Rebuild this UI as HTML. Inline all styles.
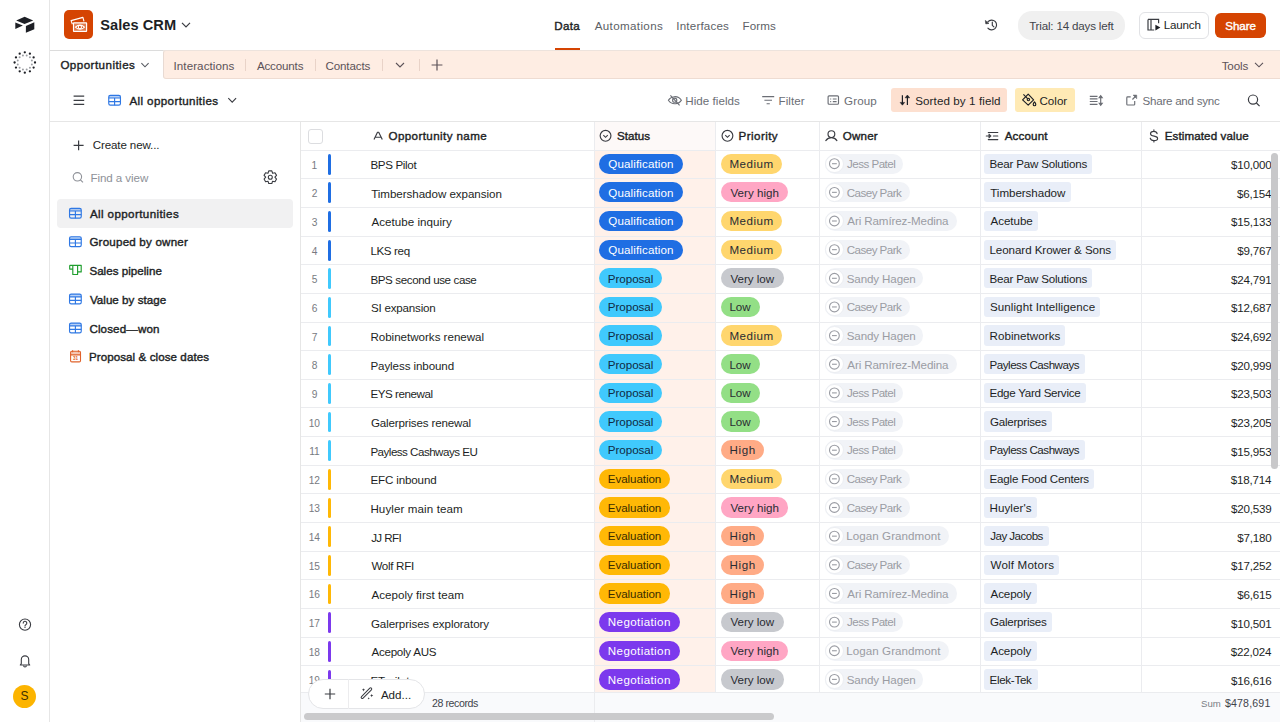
<!DOCTYPE html><html><head><meta charset="utf-8"><title>Sales CRM</title><style>
*{box-sizing:border-box;margin:0;padding:0}
html,body{width:1280px;height:722px;overflow:hidden;background:#fff;font-family:"Liberation Sans", sans-serif;color:#1d1f25}
.a{position:absolute}
.t{position:absolute;white-space:nowrap;line-height:1}
svg{position:absolute;overflow:visible}
</style></head><body>
<div class="a" style="left:49px;top:0;width:1px;height:722px;background:#e6e6e6"></div>
<svg style="left:0;top:0" width="50" height="50" viewBox="0 0 50 50">
<path d="M24.6 16.8 L33.2 20.4 L24.6 24.1 L16.2 20.5 Z" fill="#1d1f25"/>
<path d="M15.3 22.4 L22.9 25.6 L15.3 28.9 Z" fill="#1d1f25"/>
<path d="M25.9 25.9 L34.3 22.3 L34.3 29.3 L25.9 32.8 Z" fill="#1d1f25"/>
</svg>
<svg style="left:0;top:0" width="50" height="90"><circle cx="24.80" cy="52.30" r="1.15" fill="#1d1f25"/><circle cx="26.69" cy="55.45" r="1.0" fill="#9c9ea3"/><circle cx="29.90" cy="53.67" r="1.15" fill="#1d1f25"/><circle cx="29.96" cy="57.34" r="1.0" fill="#9c9ea3"/><circle cx="33.63" cy="57.40" r="1.15" fill="#1d1f25"/><circle cx="31.85" cy="60.61" r="1.0" fill="#9c9ea3"/><circle cx="35.00" cy="62.50" r="1.15" fill="#1d1f25"/><circle cx="31.85" cy="64.39" r="1.0" fill="#9c9ea3"/><circle cx="33.63" cy="67.60" r="1.15" fill="#1d1f25"/><circle cx="29.96" cy="67.66" r="1.0" fill="#9c9ea3"/><circle cx="29.90" cy="71.33" r="1.15" fill="#1d1f25"/><circle cx="26.69" cy="69.55" r="1.0" fill="#9c9ea3"/><circle cx="24.80" cy="72.70" r="1.15" fill="#1d1f25"/><circle cx="22.91" cy="69.55" r="1.0" fill="#9c9ea3"/><circle cx="19.70" cy="71.33" r="1.15" fill="#1d1f25"/><circle cx="19.64" cy="67.66" r="1.0" fill="#9c9ea3"/><circle cx="15.97" cy="67.60" r="1.15" fill="#1d1f25"/><circle cx="17.75" cy="64.39" r="1.0" fill="#9c9ea3"/><circle cx="14.60" cy="62.50" r="1.15" fill="#1d1f25"/><circle cx="17.75" cy="60.61" r="1.0" fill="#9c9ea3"/><circle cx="15.97" cy="57.40" r="1.15" fill="#1d1f25"/><circle cx="19.64" cy="57.34" r="1.0" fill="#9c9ea3"/><circle cx="19.70" cy="53.67" r="1.15" fill="#1d1f25"/><circle cx="22.91" cy="55.45" r="1.0" fill="#9c9ea3"/></svg>
<svg style="left:0;top:600px" width="50" height="50" viewBox="0 600 50 50">
<circle cx="25" cy="624.6" r="5.6" fill="none" stroke="#3a3c42" stroke-width="1.1"/>
<path d="M23.2 623.1 a1.8 1.8 0 1 1 2.6 1.6 c-0.6 0.3 -0.8 0.6 -0.8 1.2" fill="none" stroke="#3a3c42" stroke-width="1.1" stroke-linecap="round"/>
<circle cx="25" cy="627.4" r="0.6" fill="#3a3c42"/>
</svg>
<svg style="left:0;top:640px" width="50" height="40" viewBox="0 640 50 40">
<path d="M20.3 665 L21.3 663.6 L21.3 659.6 a3.7 3.7 0 0 1 7.4 0 L28.7 663.6 L29.7 665 Z" fill="none" stroke="#3a3c42" stroke-width="1.1" stroke-linejoin="round"/>
<path d="M23.6 665.6 a1.4 1.4 0 0 0 2.8 0" fill="none" stroke="#3a3c42" stroke-width="1.1"/>
</svg>
<div class="a" style="left:13px;top:684.5px;width:23px;height:23px;border-radius:50%;background:#fcb400"></div>
<div class="t" style="left:20.60px;top:690px;font-size:12px;color:#3b2f00">S</div>
<div class="a" style="left:64.4px;top:10.4px;width:28.7px;height:28.7px;border-radius:5px;background:#d54402"></div>
<div class="t" style="left:100.20px;top:18px;font-size:14.6px;color:#1d1f25;font-weight:700;letter-spacing:0.062px">Sales CRM</div>
<svg style="left:180px;top:20px" width="12" height="10" viewBox="0 0 12 10"><path d="M2 2.8 L6 6.8 L10 2.8" fill="none" stroke="#3a3c42" stroke-width="1.2"/></svg>
<div class="t" style="left:554.30px;top:20px;font-size:11.6px;color:#1d1f25;-webkit-text-stroke:0.4px #1d1f25;letter-spacing:0.300px">Data</div>
<div class="t" style="left:594.70px;top:20px;font-size:11.6px;color:#5c5f66;letter-spacing:0.360px">Automations</div>
<div class="t" style="left:676.30px;top:20px;font-size:11.6px;color:#5c5f66;letter-spacing:0.189px">Interfaces</div>
<div class="t" style="left:742.50px;top:20px;font-size:11.6px;color:#5c5f66;letter-spacing:0.100px">Forms</div>
<div class="a" style="left:555px;top:48px;width:25px;height:2px;background:#d54402"></div>
<svg style="left:980px;top:14px" width="24" height="22" viewBox="980 14 24 22">
<path d="M987.9 28.1 A4.9 4.9 0 1 0 988.0 21.7" fill="none" stroke="#3a3c42" stroke-width="1.15" stroke-linecap="round"/>
<path d="M985.3 20.4 L985.8 23.9 L989.0 23.4 Z" fill="#3a3c42" stroke="#3a3c42" stroke-width="0.6" stroke-linejoin="round"/>
<path d="M992.3 22.1 L992.3 25.3 L993.9 26.8" fill="none" stroke="#3a3c42" stroke-width="1.15" stroke-linecap="round" stroke-linejoin="round"/>
</svg>
<div class="a" style="left:1018px;top:11px;width:107px;height:28.5px;border-radius:14px;background:#f0f0f0"></div>
<div class="t" style="left:1029.15px;top:20px;font-size:11.6px;color:#41444b;letter-spacing:-0.178px">Trial: 14 days left</div>
<div class="a" style="left:1139px;top:12px;width:70px;height:27px;border-radius:6px;background:#fff;border:1px solid #e1e2e5"></div>
<svg style="left:1146px;top:18px" width="16" height="14" viewBox="0 0 16 14">
<path d="M2 1.4 L12.6 1.4 L12.6 5.2 M2 1.4 L2 12 L8.2 12 M5 1.4 L5 12" fill="none" stroke="#3a3c42" stroke-width="1.2"/>
<path d="M9.4 6.8 L14.4 9.6 L9.4 12.4 Z" fill="#1d1f25"/>
</svg>
<div class="t" style="left:1163.80px;top:19px;font-size:11.6px;color:#1d1f25;letter-spacing:-0.180px">Launch</div>
<div class="a" style="left:1215px;top:12.5px;width:51px;height:25.5px;border-radius:6px;background:#d54402"></div>
<div class="t" style="left:1225.30px;top:20px;font-size:11.6px;color:#fff;-webkit-text-stroke:0.4px #fff;letter-spacing:-0.075px">Share</div>
<div class="a" style="left:50px;top:50px;width:1230px;height:1px;background:#ebe4e0"></div>
<div class="a" style="left:163px;top:50px;width:1117px;height:29px;background:#feede3;border-top:1px solid #ede3dd;border-bottom:1px solid #eedcd2;border-left:1px solid #e8dad3;border-radius:3px 0 0 3px"></div>
<div class="a" style="left:50px;top:50px;width:113px;height:1px;background:#dcdcdc"></div>
<div class="t" style="left:60.40px;top:59px;font-size:11.6px;color:#1d1f25;-webkit-text-stroke:0.4px #1d1f25;letter-spacing:0.458px">Opportunities</div>
<svg style="left:139px;top:60px" width="12" height="10" viewBox="0 0 12 10"><path d="M2.4 3.2 L6 6.8 L9.6 3.2" fill="none" stroke="#55585f" stroke-width="1.1"/></svg>
<div class="t" style="left:173.50px;top:60px;font-size:11.6px;color:#5c5258;letter-spacing:0.082px">Interactions</div>
<div class="t" style="left:256.90px;top:60px;font-size:11.6px;color:#5c5258;letter-spacing:-0.164px">Accounts</div>
<div class="t" style="left:325.50px;top:60px;font-size:11.6px;color:#5c5258;letter-spacing:-0.143px">Contacts</div>
<div class="a" style="left:245px;top:59px;width:1px;height:12px;background:#e9d3c8"></div>
<div class="a" style="left:315px;top:59px;width:1px;height:12px;background:#e9d3c8"></div>
<div class="a" style="left:382px;top:59px;width:1px;height:12px;background:#e9d3c8"></div>
<div class="a" style="left:419px;top:59px;width:1px;height:12px;background:#e9d3c8"></div>
<svg style="left:394px;top:60px" width="12" height="10" viewBox="0 0 12 10"><path d="M2 3 L6 7 L10 3" fill="none" stroke="#5c5258" stroke-width="1.1"/></svg>
<svg style="left:430px;top:58px" width="14" height="14" viewBox="0 0 14 14"><path d="M7 1.6 L7 12.4 M1.6 7 L12.4 7" fill="none" stroke="#5c5258" stroke-width="1.2"/></svg>
<div class="t" style="left:1221.65px;top:60px;font-size:11.6px;color:#5c5258;letter-spacing:-0.075px">Tools</div>
<svg style="left:1253px;top:60px" width="12" height="10" viewBox="0 0 12 10"><path d="M2 2.8 L6 6.8 L10 2.8" fill="none" stroke="#5c5258" stroke-width="1.1"/></svg>
<div class="a" style="left:50px;top:121px;width:1230px;height:1px;background:#e6e6e6"></div>
<div class="t" style="left:129.50px;top:95px;font-size:11.6px;color:#1d1f25;-webkit-text-stroke:0.4px #1d1f25;letter-spacing:0.378px">All opportunities</div>
<div class="t" style="left:685.25px;top:95px;font-size:11.6px;color:#6b6e75;letter-spacing:0.050px">Hide fields</div>
<div class="t" style="left:778.50px;top:95px;font-size:11.6px;color:#6b6e75;letter-spacing:0.050px">Filter</div>
<div class="t" style="left:844.00px;top:95px;font-size:11.6px;color:#6b6e75;letter-spacing:0.125px">Group</div>
<div class="a" style="left:891px;top:88px;width:116px;height:23.5px;border-radius:3px;background:#fde0d0"></div>
<div class="t" style="left:915.25px;top:95px;font-size:11.6px;color:#1d1f25;letter-spacing:0.094px">Sorted by 1 field</div>
<div class="a" style="left:1014.5px;top:88px;width:60px;height:23.5px;border-radius:3px;background:#ffeab5"></div>
<div class="t" style="left:1039.50px;top:95px;font-size:11.6px;color:#1d1f25">Color</div>
<div class="t" style="left:1142.50px;top:95px;font-size:11.6px;color:#6b6e75;letter-spacing:-0.250px">Share and sync</div>
<div class="a" style="left:300px;top:122px;width:1px;height:600px;background:#e6e6e6"></div>
<div class="t" style="left:92.80px;top:139px;font-size:11.6px;color:#1d1f25;letter-spacing:-0.138px">Create new...</div>
<div class="t" style="left:90.40px;top:172px;font-size:11.6px;color:#8e9198;letter-spacing:-0.075px">Find a view</div>
<div class="a" style="left:57px;top:199px;width:236px;height:28.5px;border-radius:4px;background:#f1f1f2"></div>
<div class="t" style="left:89.90px;top:208px;font-size:11.6px;color:#1d1f25;-webkit-text-stroke:0.4px #1d1f25;letter-spacing:0.397px">All opportunities</div>
<div class="t" style="left:89.40px;top:236px;font-size:11.6px;color:#1d1f25;-webkit-text-stroke:0.4px #1d1f25;letter-spacing:0.203px">Grouped by owner</div>
<div class="t" style="left:89.40px;top:265px;font-size:11.6px;color:#1d1f25;-webkit-text-stroke:0.4px #1d1f25;letter-spacing:0.019px">Sales pipeline</div>
<div class="t" style="left:89.90px;top:294px;font-size:11.6px;color:#1d1f25;-webkit-text-stroke:0.4px #1d1f25;letter-spacing:0.031px">Value by stage</div>
<div class="t" style="left:89.40px;top:323px;font-size:11.6px;color:#1d1f25;-webkit-text-stroke:0.4px #1d1f25;letter-spacing:0.128px">Closed—won</div>
<div class="t" style="left:88.90px;top:351px;font-size:11.6px;color:#1d1f25;-webkit-text-stroke:0.4px #1d1f25;letter-spacing:0.074px">Proposal &amp; close dates</div>
<div class="a" style="left:595px;top:122px;width:120px;height:28px;background:#fdf9f8"></div>
<div class="a" style="left:595px;top:151px;width:120px;height:541px;background:#fff1ea"></div>
<div class="a" style="left:307.5px;top:128.5px;width:15px;height:15px;border-radius:3px;border:1px solid #dcdde0;background:#fff"></div>
<div class="t" style="left:388.50px;top:130px;font-size:11.6px;color:#1d1f25;-webkit-text-stroke:0.4px #1d1f25;letter-spacing:0.400px">Opportunity name</div>
<div class="t" style="left:617.10px;top:130px;font-size:11.6px;color:#1d1f25;-webkit-text-stroke:0.4px #1d1f25">Status</div>
<div class="t" style="left:738.60px;top:130px;font-size:11.6px;color:#1d1f25;-webkit-text-stroke:0.4px #1d1f25;letter-spacing:0.429px">Priority</div>
<div class="t" style="left:842.70px;top:130px;font-size:11.6px;color:#1d1f25;-webkit-text-stroke:0.4px #1d1f25;letter-spacing:0.200px">Owner</div>
<div class="t" style="left:1004.70px;top:130px;font-size:11.6px;color:#1d1f25;-webkit-text-stroke:0.4px #1d1f25;letter-spacing:0.150px">Account</div>
<div class="t" style="left:1164.70px;top:130px;font-size:11.6px;color:#1d1f25;-webkit-text-stroke:0.4px #1d1f25;letter-spacing:0.107px">Estimated value</div>
<div class="a" style="left:301px;top:150px;width:979px;height:1px;background:#ebecef"></div>
<div class="a" style="left:594px;top:122px;width:1px;height:570px;background:#ebecef"></div>
<div class="a" style="left:715px;top:122px;width:1px;height:570px;background:#ebecef"></div>
<div class="a" style="left:819px;top:122px;width:1px;height:570px;background:#ebecef"></div>
<div class="a" style="left:980px;top:122px;width:1px;height:570px;background:#ebecef"></div>
<div class="a" style="left:1141px;top:122px;width:1px;height:570px;background:#ebecef"></div>
<div class="a" style="left:301px;top:178px;width:979px;height:1px;background:#ebecef"></div>
<div class="t" style="left:311.60px;top:161px;font-size:10.2px;color:#777a81;letter-spacing:-0.200px">1</div>
<div class="a" style="left:327.7px;top:153.80px;width:3.6px;height:20.8px;border-radius:2px;background:#1f6ee3"></div>
<div class="t" style="left:370.40px;top:159px;font-size:11.6px;color:#1d1f25;letter-spacing:-0.337px">BPS Pilot</div>
<div class="a" style="left:599.4px;top:153.55px;width:83.5px;height:20.3px;border-radius:10.15px;background:#1f6ee3"></div>
<div class="t" style="left:608.30px;top:158px;font-size:11.6px;color:#ffffff;letter-spacing:0.121px">Qualification</div>
<div class="a" style="left:721.4px;top:153.55px;width:60.5px;height:20.3px;border-radius:10.15px;background:#ffd66e"></div>
<div class="t" style="left:729.50px;top:158px;font-size:11.6px;color:#2a2c33;letter-spacing:0.460px">Medium</div>
<div class="a" style="left:825.25px;top:153.55px;width:78.1px;height:20.3px;border-radius:10.15px;background:#f1f3f7"></div>
<div class="a" style="left:825.2px;top:154.50px;width:18.4px;height:18.4px;border-radius:50%;background:#fff;border:1px solid #eceef2"></div>
<div class="t" style="left:847.00px;top:158px;font-size:11.6px;color:#9a9ca3;letter-spacing:-0.517px">Jess Patel</div>
<div class="a" style="left:984.2px;top:153.55px;width:108.3px;height:20.3px;border-radius:3px;background:#e9eef8"></div>
<div class="t" style="left:989.50px;top:158px;font-size:11.6px;color:#1d1f25;letter-spacing:-0.203px">Bear Paw Solutions</div>
<div class="t" style="left:1230.90px;top:159px;font-size:11.6px;color:#1d1f25;letter-spacing:-0.200px">$10,000</div>
<div class="a" style="left:301px;top:207px;width:979px;height:1px;background:#ebecef"></div>
<div class="t" style="left:311.73px;top:189px;font-size:10.2px;color:#777a81;letter-spacing:-0.200px">2</div>
<div class="a" style="left:327.7px;top:182.45px;width:3.6px;height:20.8px;border-radius:2px;background:#1f6ee3"></div>
<div class="t" style="left:371.15px;top:188px;font-size:11.6px;color:#1d1f25;letter-spacing:-0.045px">Timbershadow expansion</div>
<div class="a" style="left:599.4px;top:182.20px;width:83.5px;height:20.3px;border-radius:10.15px;background:#1f6ee3"></div>
<div class="t" style="left:608.30px;top:187px;font-size:11.6px;color:#ffffff;letter-spacing:0.121px">Qualification</div>
<div class="a" style="left:721.4px;top:182.20px;width:66.5px;height:20.3px;border-radius:10.15px;background:#ffa6c4"></div>
<div class="t" style="left:730.50px;top:187px;font-size:11.6px;color:#2a2c33;letter-spacing:0.006px">Very high</div>
<div class="a" style="left:825.25px;top:182.20px;width:84.9px;height:20.3px;border-radius:10.15px;background:#f1f3f7"></div>
<div class="a" style="left:825.2px;top:183.15px;width:18.4px;height:18.4px;border-radius:50%;background:#fff;border:1px solid #eceef2"></div>
<div class="t" style="left:846.75px;top:187px;font-size:11.6px;color:#9a9ca3;letter-spacing:-0.539px">Casey Park</div>
<div class="a" style="left:984.2px;top:182.20px;width:87.0px;height:20.3px;border-radius:3px;background:#e9eef8"></div>
<div class="t" style="left:990.25px;top:187px;font-size:11.6px;color:#1d1f25;letter-spacing:-0.045px">Timbershadow</div>
<div class="t" style="left:1236.95px;top:188px;font-size:11.6px;color:#1d1f25;letter-spacing:-0.200px">$6,154</div>
<div class="a" style="left:301px;top:236px;width:979px;height:1px;background:#ebecef"></div>
<div class="t" style="left:311.73px;top:218px;font-size:10.2px;color:#777a81;letter-spacing:-0.200px">3</div>
<div class="a" style="left:327.7px;top:211.10px;width:3.6px;height:20.8px;border-radius:2px;background:#1f6ee3"></div>
<div class="t" style="left:371.40px;top:216px;font-size:11.6px;color:#1d1f25;letter-spacing:0.036px">Acetube inquiry</div>
<div class="a" style="left:599.4px;top:210.85px;width:83.5px;height:20.3px;border-radius:10.15px;background:#1f6ee3"></div>
<div class="t" style="left:608.30px;top:215px;font-size:11.6px;color:#ffffff;letter-spacing:0.121px">Qualification</div>
<div class="a" style="left:721.4px;top:210.85px;width:60.5px;height:20.3px;border-radius:10.15px;background:#ffd66e"></div>
<div class="t" style="left:729.50px;top:215px;font-size:11.6px;color:#2a2c33;letter-spacing:0.460px">Medium</div>
<div class="a" style="left:825.25px;top:210.85px;width:131.7px;height:20.3px;border-radius:10.15px;background:#f1f3f7"></div>
<div class="a" style="left:825.2px;top:211.80px;width:18.4px;height:18.4px;border-radius:50%;background:#fff;border:1px solid #eceef2"></div>
<div class="t" style="left:847.25px;top:215px;font-size:11.6px;color:#9a9ca3;letter-spacing:-0.106px">Ari Ramírez-Medina</div>
<div class="a" style="left:984.2px;top:210.85px;width:53.7px;height:20.3px;border-radius:3px;background:#e9eef8"></div>
<div class="t" style="left:990.50px;top:215px;font-size:11.6px;color:#1d1f25;letter-spacing:-0.050px">Acetube</div>
<div class="t" style="left:1230.90px;top:216px;font-size:11.6px;color:#1d1f25;letter-spacing:-0.200px">$15,133</div>
<div class="a" style="left:301px;top:264px;width:979px;height:1px;background:#ebecef"></div>
<div class="t" style="left:311.73px;top:247px;font-size:10.2px;color:#777a81;letter-spacing:-0.200px">4</div>
<div class="a" style="left:327.7px;top:239.75px;width:3.6px;height:20.8px;border-radius:2px;background:#1f6ee3"></div>
<div class="t" style="left:370.40px;top:245px;font-size:11.6px;color:#1d1f25;letter-spacing:-0.358px">LKS req</div>
<div class="a" style="left:599.4px;top:239.50px;width:83.5px;height:20.3px;border-radius:10.15px;background:#1f6ee3"></div>
<div class="t" style="left:608.30px;top:244px;font-size:11.6px;color:#ffffff;letter-spacing:0.121px">Qualification</div>
<div class="a" style="left:721.4px;top:239.50px;width:60.5px;height:20.3px;border-radius:10.15px;background:#ffd66e"></div>
<div class="t" style="left:729.50px;top:244px;font-size:11.6px;color:#2a2c33;letter-spacing:0.460px">Medium</div>
<div class="a" style="left:825.25px;top:239.50px;width:84.9px;height:20.3px;border-radius:10.15px;background:#f1f3f7"></div>
<div class="a" style="left:825.2px;top:240.45px;width:18.4px;height:18.4px;border-radius:50%;background:#fff;border:1px solid #eceef2"></div>
<div class="t" style="left:846.75px;top:244px;font-size:11.6px;color:#9a9ca3;letter-spacing:-0.539px">Casey Park</div>
<div class="a" style="left:984.2px;top:239.50px;width:132.3px;height:20.3px;border-radius:3px;background:#e9eef8"></div>
<div class="t" style="left:989.50px;top:244px;font-size:11.6px;color:#1d1f25;letter-spacing:-0.073px">Leonard Krower &amp; Sons</div>
<div class="t" style="left:1237.20px;top:245px;font-size:11.6px;color:#1d1f25;letter-spacing:-0.200px">$9,767</div>
<div class="a" style="left:301px;top:293px;width:979px;height:1px;background:#ebecef"></div>
<div class="t" style="left:311.73px;top:275px;font-size:10.2px;color:#777a81;letter-spacing:-0.200px">5</div>
<div class="a" style="left:327.7px;top:268.40px;width:3.6px;height:20.8px;border-radius:2px;background:#40c9fd"></div>
<div class="t" style="left:370.40px;top:274px;font-size:11.6px;color:#1d1f25;letter-spacing:-0.389px">BPS second use case</div>
<div class="a" style="left:599.4px;top:268.15px;width:63.1px;height:20.3px;border-radius:10.15px;background:#40c9fd"></div>
<div class="t" style="left:607.80px;top:273px;font-size:11.6px;color:#102a43;letter-spacing:-0.029px">Proposal</div>
<div class="a" style="left:721.4px;top:268.15px;width:62.3px;height:20.3px;border-radius:10.15px;background:#c7c9ce"></div>
<div class="t" style="left:730.50px;top:273px;font-size:11.6px;color:#2a2c33;letter-spacing:-0.021px">Very low</div>
<div class="a" style="left:825.25px;top:268.15px;width:98.0px;height:20.3px;border-radius:10.15px;background:#f1f3f7"></div>
<div class="a" style="left:825.2px;top:269.10px;width:18.4px;height:18.4px;border-radius:50%;background:#fff;border:1px solid #eceef2"></div>
<div class="t" style="left:846.75px;top:273px;font-size:11.6px;color:#9a9ca3;letter-spacing:-0.125px">Sandy Hagen</div>
<div class="a" style="left:984.2px;top:268.15px;width:108.3px;height:20.3px;border-radius:3px;background:#e9eef8"></div>
<div class="t" style="left:989.50px;top:273px;font-size:11.6px;color:#1d1f25;letter-spacing:-0.203px">Bear Paw Solutions</div>
<div class="t" style="left:1230.90px;top:274px;font-size:11.6px;color:#1d1f25;letter-spacing:-0.200px">$24,791</div>
<div class="a" style="left:301px;top:322px;width:979px;height:1px;background:#ebecef"></div>
<div class="t" style="left:311.73px;top:304px;font-size:10.2px;color:#777a81;letter-spacing:-0.200px">6</div>
<div class="a" style="left:327.7px;top:297.05px;width:3.6px;height:20.8px;border-radius:2px;background:#40c9fd"></div>
<div class="t" style="left:370.90px;top:302px;font-size:11.6px;color:#1d1f25;letter-spacing:-0.200px">SI expansion</div>
<div class="a" style="left:599.4px;top:296.80px;width:63.1px;height:20.3px;border-radius:10.15px;background:#40c9fd"></div>
<div class="t" style="left:607.80px;top:301px;font-size:11.6px;color:#102a43;letter-spacing:-0.029px">Proposal</div>
<div class="a" style="left:721.4px;top:296.80px;width:38.8px;height:20.3px;border-radius:10.15px;background:#93df86"></div>
<div class="t" style="left:729.50px;top:301px;font-size:11.6px;color:#2a2c33;letter-spacing:-0.075px">Low</div>
<div class="a" style="left:825.25px;top:296.80px;width:84.9px;height:20.3px;border-radius:10.15px;background:#f1f3f7"></div>
<div class="a" style="left:825.2px;top:297.75px;width:18.4px;height:18.4px;border-radius:50%;background:#fff;border:1px solid #eceef2"></div>
<div class="t" style="left:846.75px;top:301px;font-size:11.6px;color:#9a9ca3;letter-spacing:-0.539px">Casey Park</div>
<div class="a" style="left:984.2px;top:296.80px;width:116.1px;height:20.3px;border-radius:3px;background:#e9eef8"></div>
<div class="t" style="left:990.00px;top:301px;font-size:11.6px;color:#1d1f25;letter-spacing:0.067px">Sunlight Intelligence</div>
<div class="t" style="left:1230.90px;top:302px;font-size:11.6px;color:#1d1f25;letter-spacing:-0.200px">$12,687</div>
<div class="a" style="left:301px;top:350px;width:979px;height:1px;background:#ebecef"></div>
<div class="t" style="left:311.73px;top:333px;font-size:10.2px;color:#777a81;letter-spacing:-0.200px">7</div>
<div class="a" style="left:327.7px;top:325.70px;width:3.6px;height:20.8px;border-radius:2px;background:#40c9fd"></div>
<div class="t" style="left:370.40px;top:331px;font-size:11.6px;color:#1d1f25;letter-spacing:-0.018px">Robinetworks renewal</div>
<div class="a" style="left:599.4px;top:325.45px;width:63.1px;height:20.3px;border-radius:10.15px;background:#40c9fd"></div>
<div class="t" style="left:607.80px;top:330px;font-size:11.6px;color:#102a43;letter-spacing:-0.029px">Proposal</div>
<div class="a" style="left:721.4px;top:325.45px;width:60.5px;height:20.3px;border-radius:10.15px;background:#ffd66e"></div>
<div class="t" style="left:729.50px;top:330px;font-size:11.6px;color:#2a2c33;letter-spacing:0.460px">Medium</div>
<div class="a" style="left:825.25px;top:325.45px;width:98.0px;height:20.3px;border-radius:10.15px;background:#f1f3f7"></div>
<div class="a" style="left:825.2px;top:326.40px;width:18.4px;height:18.4px;border-radius:50%;background:#fff;border:1px solid #eceef2"></div>
<div class="t" style="left:846.75px;top:330px;font-size:11.6px;color:#9a9ca3;letter-spacing:-0.125px">Sandy Hagen</div>
<div class="a" style="left:984.2px;top:325.45px;width:81.3px;height:20.3px;border-radius:3px;background:#e9eef8"></div>
<div class="t" style="left:989.50px;top:330px;font-size:11.6px;color:#1d1f25;letter-spacing:0.050px">Robinetworks</div>
<div class="t" style="left:1230.90px;top:331px;font-size:11.6px;color:#1d1f25;letter-spacing:-0.200px">$24,692</div>
<div class="a" style="left:301px;top:379px;width:979px;height:1px;background:#ebecef"></div>
<div class="t" style="left:311.73px;top:361px;font-size:10.2px;color:#777a81;letter-spacing:-0.200px">8</div>
<div class="a" style="left:327.7px;top:354.35px;width:3.6px;height:20.8px;border-radius:2px;background:#40c9fd"></div>
<div class="t" style="left:370.40px;top:360px;font-size:11.6px;color:#1d1f25;letter-spacing:-0.093px">Payless inbound</div>
<div class="a" style="left:599.4px;top:354.10px;width:63.1px;height:20.3px;border-radius:10.15px;background:#40c9fd"></div>
<div class="t" style="left:607.80px;top:359px;font-size:11.6px;color:#102a43;letter-spacing:-0.029px">Proposal</div>
<div class="a" style="left:721.4px;top:354.10px;width:38.8px;height:20.3px;border-radius:10.15px;background:#93df86"></div>
<div class="t" style="left:729.50px;top:359px;font-size:11.6px;color:#2a2c33;letter-spacing:-0.075px">Low</div>
<div class="a" style="left:825.25px;top:354.10px;width:131.7px;height:20.3px;border-radius:10.15px;background:#f1f3f7"></div>
<div class="a" style="left:825.2px;top:355.05px;width:18.4px;height:18.4px;border-radius:50%;background:#fff;border:1px solid #eceef2"></div>
<div class="t" style="left:847.25px;top:359px;font-size:11.6px;color:#9a9ca3;letter-spacing:-0.106px">Ari Ramírez-Medina</div>
<div class="a" style="left:984.2px;top:354.10px;width:100.8px;height:20.3px;border-radius:3px;background:#e9eef8"></div>
<div class="t" style="left:989.50px;top:359px;font-size:11.6px;color:#1d1f25;letter-spacing:-0.480px">Payless Cashways</div>
<div class="t" style="left:1230.90px;top:360px;font-size:11.6px;color:#1d1f25;letter-spacing:-0.200px">$20,999</div>
<div class="a" style="left:301px;top:407px;width:979px;height:1px;background:#ebecef"></div>
<div class="t" style="left:311.73px;top:390px;font-size:10.2px;color:#777a81;letter-spacing:-0.200px">9</div>
<div class="a" style="left:327.7px;top:383.00px;width:3.6px;height:20.8px;border-radius:2px;background:#40c9fd"></div>
<div class="t" style="left:370.40px;top:388px;font-size:11.6px;color:#1d1f25;letter-spacing:-0.425px">EYS renewal</div>
<div class="a" style="left:599.4px;top:382.75px;width:63.1px;height:20.3px;border-radius:10.15px;background:#40c9fd"></div>
<div class="t" style="left:607.80px;top:387px;font-size:11.6px;color:#102a43;letter-spacing:-0.029px">Proposal</div>
<div class="a" style="left:721.4px;top:382.75px;width:38.8px;height:20.3px;border-radius:10.15px;background:#93df86"></div>
<div class="t" style="left:729.50px;top:387px;font-size:11.6px;color:#2a2c33;letter-spacing:-0.075px">Low</div>
<div class="a" style="left:825.25px;top:382.75px;width:78.1px;height:20.3px;border-radius:10.15px;background:#f1f3f7"></div>
<div class="a" style="left:825.2px;top:383.70px;width:18.4px;height:18.4px;border-radius:50%;background:#fff;border:1px solid #eceef2"></div>
<div class="t" style="left:847.00px;top:387px;font-size:11.6px;color:#9a9ca3;letter-spacing:-0.517px">Jess Patel</div>
<div class="a" style="left:984.2px;top:382.75px;width:101.8px;height:20.3px;border-radius:3px;background:#e9eef8"></div>
<div class="t" style="left:989.50px;top:387px;font-size:11.6px;color:#1d1f25;letter-spacing:-0.278px">Edge Yard Service</div>
<div class="t" style="left:1230.90px;top:388px;font-size:11.6px;color:#1d1f25;letter-spacing:-0.200px">$23,503</div>
<div class="a" style="left:301px;top:436px;width:979px;height:1px;background:#ebecef"></div>
<div class="t" style="left:308.83px;top:419px;font-size:10.2px;color:#777a81;letter-spacing:-0.200px">10</div>
<div class="a" style="left:327.7px;top:411.65px;width:3.6px;height:20.8px;border-radius:2px;background:#40c9fd"></div>
<div class="t" style="left:370.90px;top:417px;font-size:11.6px;color:#1d1f25;letter-spacing:-0.161px">Galerprises renewal</div>
<div class="a" style="left:599.4px;top:411.40px;width:63.1px;height:20.3px;border-radius:10.15px;background:#40c9fd"></div>
<div class="t" style="left:607.80px;top:416px;font-size:11.6px;color:#102a43;letter-spacing:-0.029px">Proposal</div>
<div class="a" style="left:721.4px;top:411.40px;width:38.8px;height:20.3px;border-radius:10.15px;background:#93df86"></div>
<div class="t" style="left:729.50px;top:416px;font-size:11.6px;color:#2a2c33;letter-spacing:-0.075px">Low</div>
<div class="a" style="left:825.25px;top:411.40px;width:78.1px;height:20.3px;border-radius:10.15px;background:#f1f3f7"></div>
<div class="a" style="left:825.2px;top:412.35px;width:18.4px;height:18.4px;border-radius:50%;background:#fff;border:1px solid #eceef2"></div>
<div class="t" style="left:847.00px;top:416px;font-size:11.6px;color:#9a9ca3;letter-spacing:-0.517px">Jess Patel</div>
<div class="a" style="left:984.2px;top:411.40px;width:68.0px;height:20.3px;border-radius:3px;background:#e9eef8"></div>
<div class="t" style="left:990.00px;top:416px;font-size:11.6px;color:#1d1f25;letter-spacing:-0.250px">Galerprises</div>
<div class="t" style="left:1230.90px;top:417px;font-size:11.6px;color:#1d1f25;letter-spacing:-0.200px">$23,205</div>
<div class="a" style="left:301px;top:465px;width:979px;height:1px;background:#ebecef"></div>
<div class="t" style="left:309.20px;top:447px;font-size:10.2px;color:#777a81;letter-spacing:-0.200px">11</div>
<div class="a" style="left:327.7px;top:440.30px;width:3.6px;height:20.8px;border-radius:2px;background:#40c9fd"></div>
<div class="t" style="left:370.40px;top:446px;font-size:11.6px;color:#1d1f25;letter-spacing:-0.514px">Payless Cashways EU</div>
<div class="a" style="left:599.4px;top:440.05px;width:63.1px;height:20.3px;border-radius:10.15px;background:#40c9fd"></div>
<div class="t" style="left:607.80px;top:444px;font-size:11.6px;color:#102a43;letter-spacing:-0.029px">Proposal</div>
<div class="a" style="left:721.4px;top:440.05px;width:42.9px;height:20.3px;border-radius:10.15px;background:#ffab86"></div>
<div class="t" style="left:729.50px;top:444px;font-size:11.6px;color:#2a2c33;letter-spacing:0.650px">High</div>
<div class="a" style="left:825.25px;top:440.05px;width:78.1px;height:20.3px;border-radius:10.15px;background:#f1f3f7"></div>
<div class="a" style="left:825.2px;top:441.00px;width:18.4px;height:18.4px;border-radius:50%;background:#fff;border:1px solid #eceef2"></div>
<div class="t" style="left:847.00px;top:444px;font-size:11.6px;color:#9a9ca3;letter-spacing:-0.517px">Jess Patel</div>
<div class="a" style="left:984.2px;top:440.05px;width:100.8px;height:20.3px;border-radius:3px;background:#e9eef8"></div>
<div class="t" style="left:989.50px;top:444px;font-size:11.6px;color:#1d1f25;letter-spacing:-0.480px">Payless Cashways</div>
<div class="t" style="left:1230.90px;top:446px;font-size:11.6px;color:#1d1f25;letter-spacing:-0.200px">$15,953</div>
<div class="a" style="left:301px;top:493px;width:979px;height:1px;background:#ebecef"></div>
<div class="t" style="left:308.83px;top:476px;font-size:10.2px;color:#777a81;letter-spacing:-0.200px">12</div>
<div class="a" style="left:327.7px;top:468.95px;width:3.6px;height:20.8px;border-radius:2px;background:#ffb806"></div>
<div class="t" style="left:370.40px;top:474px;font-size:11.6px;color:#1d1f25;letter-spacing:-0.140px">EFC inbound</div>
<div class="a" style="left:599.4px;top:468.70px;width:71.1px;height:20.3px;border-radius:10.15px;background:#ffb806"></div>
<div class="t" style="left:607.80px;top:473px;font-size:11.6px;color:#3b2c00;letter-spacing:-0.078px">Evaluation</div>
<div class="a" style="left:721.4px;top:468.70px;width:60.5px;height:20.3px;border-radius:10.15px;background:#ffd66e"></div>
<div class="t" style="left:729.50px;top:473px;font-size:11.6px;color:#2a2c33;letter-spacing:0.460px">Medium</div>
<div class="a" style="left:825.25px;top:468.70px;width:84.9px;height:20.3px;border-radius:10.15px;background:#f1f3f7"></div>
<div class="a" style="left:825.2px;top:469.65px;width:18.4px;height:18.4px;border-radius:50%;background:#fff;border:1px solid #eceef2"></div>
<div class="t" style="left:846.75px;top:473px;font-size:11.6px;color:#9a9ca3;letter-spacing:-0.539px">Casey Park</div>
<div class="a" style="left:984.2px;top:468.70px;width:110.3px;height:20.3px;border-radius:3px;background:#e9eef8"></div>
<div class="t" style="left:989.50px;top:473px;font-size:11.6px;color:#1d1f25;letter-spacing:-0.203px">Eagle Food Centers</div>
<div class="t" style="left:1230.65px;top:474px;font-size:11.6px;color:#1d1f25;letter-spacing:-0.200px">$18,714</div>
<div class="a" style="left:301px;top:522px;width:979px;height:1px;background:#ebecef"></div>
<div class="t" style="left:308.83px;top:504px;font-size:10.2px;color:#777a81;letter-spacing:-0.200px">13</div>
<div class="a" style="left:327.7px;top:497.60px;width:3.6px;height:20.8px;border-radius:2px;background:#ffb806"></div>
<div class="t" style="left:370.40px;top:503px;font-size:11.6px;color:#1d1f25;letter-spacing:0.097px">Huyler main team</div>
<div class="a" style="left:599.4px;top:497.35px;width:71.1px;height:20.3px;border-radius:10.15px;background:#ffb806"></div>
<div class="t" style="left:607.80px;top:502px;font-size:11.6px;color:#3b2c00;letter-spacing:-0.078px">Evaluation</div>
<div class="a" style="left:721.4px;top:497.35px;width:66.5px;height:20.3px;border-radius:10.15px;background:#ffa6c4"></div>
<div class="t" style="left:730.50px;top:502px;font-size:11.6px;color:#2a2c33;letter-spacing:0.006px">Very high</div>
<div class="a" style="left:825.25px;top:497.35px;width:84.9px;height:20.3px;border-radius:10.15px;background:#f1f3f7"></div>
<div class="a" style="left:825.2px;top:498.30px;width:18.4px;height:18.4px;border-radius:50%;background:#fff;border:1px solid #eceef2"></div>
<div class="t" style="left:846.75px;top:502px;font-size:11.6px;color:#9a9ca3;letter-spacing:-0.539px">Casey Park</div>
<div class="a" style="left:984.2px;top:497.35px;width:52.7px;height:20.3px;border-radius:3px;background:#e9eef8"></div>
<div class="t" style="left:989.50px;top:502px;font-size:11.6px;color:#1d1f25;letter-spacing:0.064px">Huyler&#x27;s</div>
<div class="t" style="left:1230.90px;top:503px;font-size:11.6px;color:#1d1f25;letter-spacing:-0.200px">$20,539</div>
<div class="a" style="left:301px;top:551px;width:979px;height:1px;background:#ebecef"></div>
<div class="t" style="left:308.70px;top:533px;font-size:10.2px;color:#777a81;letter-spacing:-0.200px">14</div>
<div class="a" style="left:327.7px;top:526.25px;width:3.6px;height:20.8px;border-radius:2px;background:#ffb806"></div>
<div class="t" style="left:371.15px;top:532px;font-size:11.6px;color:#1d1f25;letter-spacing:-0.600px">JJ RFI</div>
<div class="a" style="left:599.4px;top:526.00px;width:71.1px;height:20.3px;border-radius:10.15px;background:#ffb806"></div>
<div class="t" style="left:607.80px;top:530px;font-size:11.6px;color:#3b2c00;letter-spacing:-0.078px">Evaluation</div>
<div class="a" style="left:721.4px;top:526.00px;width:42.9px;height:20.3px;border-radius:10.15px;background:#ffab86"></div>
<div class="t" style="left:729.50px;top:530px;font-size:11.6px;color:#2a2c33;letter-spacing:0.650px">High</div>
<div class="a" style="left:825.25px;top:526.00px;width:123.6px;height:20.3px;border-radius:10.15px;background:#f1f3f7"></div>
<div class="a" style="left:825.2px;top:526.95px;width:18.4px;height:18.4px;border-radius:50%;background:#fff;border:1px solid #eceef2"></div>
<div class="t" style="left:846.25px;top:530px;font-size:11.6px;color:#9a9ca3;letter-spacing:0.061px">Logan Grandmont</div>
<div class="a" style="left:984.2px;top:526.00px;width:64.4px;height:20.3px;border-radius:3px;background:#e9eef8"></div>
<div class="t" style="left:990.25px;top:530px;font-size:11.6px;color:#1d1f25;letter-spacing:-0.539px">Jay Jacobs</div>
<div class="t" style="left:1237.20px;top:532px;font-size:11.6px;color:#1d1f25;letter-spacing:-0.200px">$7,180</div>
<div class="a" style="left:301px;top:579px;width:979px;height:1px;background:#ebecef"></div>
<div class="t" style="left:308.83px;top:562px;font-size:10.2px;color:#777a81;letter-spacing:-0.200px">15</div>
<div class="a" style="left:327.7px;top:554.90px;width:3.6px;height:20.8px;border-radius:2px;background:#ffb806"></div>
<div class="t" style="left:371.40px;top:560px;font-size:11.6px;color:#1d1f25;letter-spacing:-0.300px">Wolf RFI</div>
<div class="a" style="left:599.4px;top:554.65px;width:71.1px;height:20.3px;border-radius:10.15px;background:#ffb806"></div>
<div class="t" style="left:607.80px;top:559px;font-size:11.6px;color:#3b2c00;letter-spacing:-0.078px">Evaluation</div>
<div class="a" style="left:721.4px;top:554.65px;width:42.9px;height:20.3px;border-radius:10.15px;background:#ffab86"></div>
<div class="t" style="left:729.50px;top:559px;font-size:11.6px;color:#2a2c33;letter-spacing:0.650px">High</div>
<div class="a" style="left:825.25px;top:554.65px;width:84.9px;height:20.3px;border-radius:10.15px;background:#f1f3f7"></div>
<div class="a" style="left:825.2px;top:555.60px;width:18.4px;height:18.4px;border-radius:50%;background:#fff;border:1px solid #eceef2"></div>
<div class="t" style="left:846.75px;top:559px;font-size:11.6px;color:#9a9ca3;letter-spacing:-0.539px">Casey Park</div>
<div class="a" style="left:984.2px;top:554.65px;width:75.1px;height:20.3px;border-radius:3px;background:#e9eef8"></div>
<div class="t" style="left:990.50px;top:559px;font-size:11.6px;color:#1d1f25;letter-spacing:0.185px">Wolf Motors</div>
<div class="t" style="left:1230.90px;top:560px;font-size:11.6px;color:#1d1f25;letter-spacing:-0.200px">$17,252</div>
<div class="a" style="left:301px;top:608px;width:979px;height:1px;background:#ebecef"></div>
<div class="t" style="left:308.83px;top:590px;font-size:10.2px;color:#777a81;letter-spacing:-0.200px">16</div>
<div class="a" style="left:327.7px;top:583.55px;width:3.6px;height:20.8px;border-radius:2px;background:#ffb806"></div>
<div class="t" style="left:371.40px;top:589px;font-size:11.6px;color:#1d1f25;letter-spacing:0.024px">Acepoly first team</div>
<div class="a" style="left:599.4px;top:583.30px;width:71.1px;height:20.3px;border-radius:10.15px;background:#ffb806"></div>
<div class="t" style="left:607.80px;top:588px;font-size:11.6px;color:#3b2c00;letter-spacing:-0.078px">Evaluation</div>
<div class="a" style="left:721.4px;top:583.30px;width:42.9px;height:20.3px;border-radius:10.15px;background:#ffab86"></div>
<div class="t" style="left:729.50px;top:588px;font-size:11.6px;color:#2a2c33;letter-spacing:0.650px">High</div>
<div class="a" style="left:825.25px;top:583.30px;width:131.7px;height:20.3px;border-radius:10.15px;background:#f1f3f7"></div>
<div class="a" style="left:825.2px;top:584.25px;width:18.4px;height:18.4px;border-radius:50%;background:#fff;border:1px solid #eceef2"></div>
<div class="t" style="left:847.25px;top:588px;font-size:11.6px;color:#9a9ca3;letter-spacing:-0.106px">Ari Ramírez-Medina</div>
<div class="a" style="left:984.2px;top:583.30px;width:52.7px;height:20.3px;border-radius:3px;background:#e9eef8"></div>
<div class="t" style="left:990.50px;top:588px;font-size:11.6px;color:#1d1f25;letter-spacing:-0.092px">Acepoly</div>
<div class="t" style="left:1237.20px;top:589px;font-size:11.6px;color:#1d1f25;letter-spacing:-0.200px">$6,615</div>
<div class="a" style="left:301px;top:637px;width:979px;height:1px;background:#ebecef"></div>
<div class="t" style="left:308.83px;top:619px;font-size:10.2px;color:#777a81;letter-spacing:-0.200px">17</div>
<div class="a" style="left:327.7px;top:612.20px;width:3.6px;height:20.8px;border-radius:2px;background:#7c39ed"></div>
<div class="t" style="left:370.90px;top:618px;font-size:11.6px;color:#1d1f25;letter-spacing:-0.075px">Galerprises exploratory</div>
<div class="a" style="left:599.4px;top:611.95px;width:80.2px;height:20.3px;border-radius:10.15px;background:#7c39ed"></div>
<div class="t" style="left:607.80px;top:616px;font-size:11.6px;color:#ffffff;letter-spacing:0.390px">Negotiation</div>
<div class="a" style="left:721.4px;top:611.95px;width:62.3px;height:20.3px;border-radius:10.15px;background:#c7c9ce"></div>
<div class="t" style="left:730.50px;top:616px;font-size:11.6px;color:#2a2c33;letter-spacing:-0.021px">Very low</div>
<div class="a" style="left:825.25px;top:611.95px;width:78.1px;height:20.3px;border-radius:10.15px;background:#f1f3f7"></div>
<div class="a" style="left:825.2px;top:612.90px;width:18.4px;height:18.4px;border-radius:50%;background:#fff;border:1px solid #eceef2"></div>
<div class="t" style="left:847.00px;top:616px;font-size:11.6px;color:#9a9ca3;letter-spacing:-0.517px">Jess Patel</div>
<div class="a" style="left:984.2px;top:611.95px;width:68.0px;height:20.3px;border-radius:3px;background:#e9eef8"></div>
<div class="t" style="left:990.00px;top:616px;font-size:11.6px;color:#1d1f25;letter-spacing:-0.250px">Galerprises</div>
<div class="t" style="left:1230.90px;top:618px;font-size:11.6px;color:#1d1f25;letter-spacing:-0.200px">$10,501</div>
<div class="a" style="left:301px;top:665px;width:979px;height:1px;background:#ebecef"></div>
<div class="t" style="left:308.83px;top:648px;font-size:10.2px;color:#777a81;letter-spacing:-0.200px">18</div>
<div class="a" style="left:327.7px;top:640.85px;width:3.6px;height:20.8px;border-radius:2px;background:#7c39ed"></div>
<div class="t" style="left:371.40px;top:646px;font-size:11.6px;color:#1d1f25;letter-spacing:-0.245px">Acepoly AUS</div>
<div class="a" style="left:599.4px;top:640.60px;width:80.2px;height:20.3px;border-radius:10.15px;background:#7c39ed"></div>
<div class="t" style="left:607.80px;top:645px;font-size:11.6px;color:#ffffff;letter-spacing:0.390px">Negotiation</div>
<div class="a" style="left:721.4px;top:640.60px;width:66.5px;height:20.3px;border-radius:10.15px;background:#ffa6c4"></div>
<div class="t" style="left:730.50px;top:645px;font-size:11.6px;color:#2a2c33;letter-spacing:0.006px">Very high</div>
<div class="a" style="left:825.25px;top:640.60px;width:123.6px;height:20.3px;border-radius:10.15px;background:#f1f3f7"></div>
<div class="a" style="left:825.2px;top:641.55px;width:18.4px;height:18.4px;border-radius:50%;background:#fff;border:1px solid #eceef2"></div>
<div class="t" style="left:846.25px;top:645px;font-size:11.6px;color:#9a9ca3;letter-spacing:0.061px">Logan Grandmont</div>
<div class="a" style="left:984.2px;top:640.60px;width:52.7px;height:20.3px;border-radius:3px;background:#e9eef8"></div>
<div class="t" style="left:990.50px;top:645px;font-size:11.6px;color:#1d1f25;letter-spacing:-0.092px">Acepoly</div>
<div class="t" style="left:1230.65px;top:646px;font-size:11.6px;color:#1d1f25;letter-spacing:-0.200px">$22,024</div>
<div class="a" style="left:301px;top:694px;width:979px;height:1px;background:#ebecef"></div>
<div class="t" style="left:308.83px;top:676px;font-size:10.2px;color:#777a81;letter-spacing:-0.200px">19</div>
<div class="a" style="left:327.7px;top:669.50px;width:3.6px;height:20.8px;border-radius:2px;background:#7c39ed"></div>
<div class="t" style="left:370.40px;top:675px;font-size:11.6px;color:#1d1f25">ET pilot</div>
<div class="a" style="left:599.4px;top:669.25px;width:80.2px;height:20.3px;border-radius:10.15px;background:#7c39ed"></div>
<div class="t" style="left:607.80px;top:674px;font-size:11.6px;color:#ffffff;letter-spacing:0.390px">Negotiation</div>
<div class="a" style="left:721.4px;top:669.25px;width:62.3px;height:20.3px;border-radius:10.15px;background:#c7c9ce"></div>
<div class="t" style="left:730.50px;top:674px;font-size:11.6px;color:#2a2c33;letter-spacing:-0.021px">Very low</div>
<div class="a" style="left:825.25px;top:669.25px;width:98.0px;height:20.3px;border-radius:10.15px;background:#f1f3f7"></div>
<div class="a" style="left:825.2px;top:670.20px;width:18.4px;height:18.4px;border-radius:50%;background:#fff;border:1px solid #eceef2"></div>
<div class="t" style="left:846.75px;top:674px;font-size:11.6px;color:#9a9ca3;letter-spacing:-0.125px">Sandy Hagen</div>
<div class="a" style="left:984.2px;top:669.25px;width:53.4px;height:20.3px;border-radius:3px;background:#e9eef8"></div>
<div class="t" style="left:989.50px;top:674px;font-size:11.6px;color:#1d1f25;letter-spacing:-0.300px">Elek-Tek</div>
<div class="t" style="left:1230.90px;top:675px;font-size:11.6px;color:#1d1f25;letter-spacing:-0.200px">$16,616</div>
<div class="a" style="left:1271px;top:153px;width:6.5px;height:316px;border-radius:4px;background:#c8c8ca"></div>
<div class="a" style="left:301px;top:692px;width:979px;height:30px;background:#f9fafc;border-top:1px solid #ebecef"></div>
<div class="a" style="left:594px;top:692px;width:1px;height:30px;background:#ebecef"></div>
<div class="t" style="left:431.90px;top:698px;font-size:10.6px;color:#41444b;letter-spacing:-0.394px">28 records</div>
<div class="t" style="left:1201.10px;top:699px;font-size:9.6px;color:#7a7d84;letter-spacing:-0.025px">Sum</div>
<div class="t" style="left:1224.90px;top:698px;font-size:10.6px;color:#41444b;letter-spacing:0.179px">$478,691</div>
<div class="a" style="left:304px;top:713px;width:470px;height:6.5px;border-radius:4px;background:#cacacc"></div>
<div class="a" style="left:308px;top:678.7px;width:117px;height:30.6px;border-radius:16px;background:#fff;border:1px solid #e4e5e8"></div>
<div class="a" style="left:348px;top:679px;width:1px;height:30px;background:#ececee"></div>
<svg style="left:322px;top:686px" width="16" height="16" viewBox="0 0 16 16"><path d="M8 2.8 L8 13.2 M2.8 8 L13.2 8" fill="none" stroke="#3a3c42" stroke-width="1.2"/></svg>
<div class="t" style="left:380.90px;top:689px;font-size:11.6px;color:#1d1f25;letter-spacing:-0.010px">Add...</div>
<svg style="left:0;top:0" width="1280" height="722" viewBox="0 0 1280 722"><g fill="none" stroke="#fff" stroke-width="1.15" stroke-linejoin="round"><path d="M72.4 24.2 L71.1 20.6 L82.9 17.4 L84.0 21.4"/><rect x="73.5" y="22.8" width="13.1" height="8.6" rx="0.4" fill="#fff" fill-opacity="0.3"/><path d="M75.4 27.1 Q79.9 23.0 84.5 27.1 Q79.9 31.2 75.4 27.1 Z" fill="#d54402"/><circle cx="79.9" cy="27.1" r="1.6"/></g><path d="M73.6 96.2 H84.2 M73.6 100.3 H84.2 M73.6 104.4 H84.2" fill="none" stroke="#3a3c42" stroke-width="1.2"/><g fill="none" stroke="#2f78e4" stroke-width="1.15"><rect x="108.75" y="95.35" width="11.7" height="9.8" rx="1.6"/><rect x="108.75" y="95.35" width="11.7" height="2.6" fill="#2f78e4" fill-opacity="0.35" stroke="none"/><path d="M108.75 98.00 H120.45 M108.75 101.55 H120.45 M114.60 98.00 V105.15"/></g><path d="M228.3 98.2 L232.2 102.1 L236.1 98.2" fill="none" stroke="#3a3c42" stroke-width="1.1"/><g fill="none" stroke="#6b6e75" stroke-width="1.1"><path d="M668.4 100.2 C670.6 96.4 677.6 94.6 681.4 100.2 C679.2 104 672.2 105.8 668.4 100.2 Z"/><circle cx="674.7" cy="100.2" r="2.1"/><path d="M670.4 95.3 L679.6 105.4"/></g><g fill="none" stroke="#6b6e75" stroke-width="1.1"><path d="M762.2 96.6 H774.2 M764.4 100.2 H772 M766.6 103.8 H769.8"/></g><g fill="none" stroke="#6b6e75" stroke-width="1.15"><rect x="828.1" y="95.8" width="10.4" height="8.4" rx="1"/><path d="M830.2 99 H831.2 M832.8 99 H836.6 M830.2 101.6 H831.2 M832.8 101.6 H836.6"/></g><g fill="none" stroke="#1d1f25" stroke-width="1.2"><path d="M902.4 95.2 V103.6 M907.4 96.6 V104.9"/><path d="M900.1 102.4 L904.7 102.4 L902.4 105.2 Z M905.1 97.8 L909.7 97.8 L907.4 95 Z" fill="#1d1f25" stroke-width="0.5" stroke-linejoin="round"/></g><g fill="none" stroke="#1d1f25" stroke-width="1.15" stroke-linejoin="round"><path d="M1028.2 94.2 L1033.6 99.9 L1028.2 105.2 L1022.6 99.9 Z"/><path d="M1023.4 94.3 L1027.6 98.6"/><circle cx="1028.4" cy="99.5" r="1.2"/><path d="M1034.5 101.9 C1035.4 103 1035.8 103.8 1035.8 104.4 A1.3 1.3 0 0 1 1033.2 104.4 C1033.2 103.8 1033.6 103 1034.5 101.9 Z"/></g><g fill="none" stroke="#6b6e75" stroke-width="1.15"><path d="M1089.8 96.3 H1097.5 M1089.8 98.8 H1097.5 M1089.8 101.5 H1097.5 M1089.8 104.3 H1097.5 M1100.7 96.6 V104.2"/><path d="M1099.2 97.6 L1100.7 95.6 L1102.2 97.6 Z M1099.2 103.2 L1100.7 105.2 L1102.2 103.2 Z" fill="#6b6e75"/></g><g fill="none" stroke="#6b6e75" stroke-width="1.15"><path d="M1130.7 96.9 H1127.6 Q1126.8 96.9 1126.8 97.7 V104.2 Q1126.8 105 1127.6 105 H1133.9 Q1134.7 105 1134.7 104.2 V101.1"/><path d="M1132.4 99.5 L1135.9 96"/><path d="M1133.1 95.1 H1136.7 V98.7 Z" fill="#6b6e75" stroke-linejoin="round" stroke-width="0.6"/></g><g fill="none" stroke="#3a3c42" stroke-width="1.2"><circle cx="1253" cy="99.6" r="4.6"/><path d="M1256.4 103 L1259.6 106.2"/></g><path d="M78.6 140.4 V150.2 M73.6 145.3 H83.6" fill="none" stroke="#3a3c42" stroke-width="1.2"/><g fill="none" stroke="#8e9198" stroke-width="1.1"><circle cx="77.4" cy="176.8" r="4.2"/><path d="M80.4 179.8 L83 182.4"/></g><g fill="none" stroke="#3a3c42" stroke-width="1.1" stroke-linejoin="round"><path d="M268.01 173.21 L268.75 170.89 L271.85 170.89 L272.59 173.21 L272.61 173.22 L275.00 172.71 L276.54 175.38 L274.90 177.18 L274.90 177.22 L276.54 179.02 L275.00 181.69 L272.61 181.18 L272.59 181.19 L271.85 183.51 L268.75 183.51 L268.01 181.19 L267.99 181.18 L265.60 181.69 L264.06 179.02 L265.70 177.22 L265.70 177.18 L264.06 175.38 L265.60 172.71 L267.99 173.22 Z"/><circle cx="270.3" cy="177.2" r="2"/></g><g fill="none" stroke="#2f78e4" stroke-width="1.15"><rect x="69.55" y="208.35" width="11.7" height="9.8" rx="1.6"/><rect x="69.55" y="208.35" width="11.7" height="2.6" fill="#2f78e4" fill-opacity="0.35" stroke="none"/><path d="M69.55 211.00 H81.25 M69.55 214.55 H81.25 M75.40 211.00 V218.15"/></g><g fill="none" stroke="#2f78e4" stroke-width="1.15"><rect x="69.55" y="236.75" width="11.7" height="9.8" rx="1.6"/><rect x="69.55" y="236.75" width="11.7" height="2.6" fill="#2f78e4" fill-opacity="0.35" stroke="none"/><path d="M69.55 239.40 H81.25 M69.55 242.95 H81.25 M75.40 239.40 V246.55"/></g><g fill="none" stroke="#1f9e2e" stroke-width="1.15" stroke-linejoin="round"><path d="M69.7 265.30 H81.2 V271.90 H77.6 M69.7 265.30 V269.10 H72.8 M72.8 265.30 V274.50 H77.6 V265.30"/></g><g fill="none" stroke="#2f78e4" stroke-width="1.15"><rect x="69.55" y="294.15" width="11.7" height="9.8" rx="1.6"/><rect x="69.55" y="294.15" width="11.7" height="2.6" fill="#2f78e4" fill-opacity="0.35" stroke="none"/><path d="M69.55 296.80 H81.25 M69.55 300.35 H81.25 M75.40 296.80 V303.95"/></g><g fill="none" stroke="#2f78e4" stroke-width="1.15"><rect x="69.55" y="323.15" width="11.7" height="9.8" rx="1.6"/><rect x="69.55" y="323.15" width="11.7" height="2.6" fill="#2f78e4" fill-opacity="0.35" stroke="none"/><path d="M69.55 325.80 H81.25 M69.55 329.35 H81.25 M75.40 325.80 V332.95"/></g><g fill="none" stroke="#e0622b" stroke-width="1.1"><rect x="70.6" y="351.30" width="9.9" height="10.6" rx="1.2"/><rect x="70.6" y="351.30" width="9.9" height="3.6" fill="#e0622b" fill-opacity="0.35" stroke="none"/><path d="M70.6 354.90 H80.5 M72.6 350.30 V352.30 M78.4 350.30 V352.30"/></g><text x="75.55" y="360.30" font-size="4.6" font-weight="700" text-anchor="middle" fill="#e0622b" font-family="Liberation Sans">31</text><path d="M374 139.6 L377.5 132.2 H378.7 L382.3 139.6 M375.3 137.2 H381" fill="none" stroke="#3a3c42" stroke-width="1.15" stroke-linejoin="round"/><g fill="none" stroke="#3a3c42" stroke-width="1.15"><circle cx="605.55" cy="135.8" r="5.4"/><path d="M603.35 135.20 L605.55 137.30 L607.75 135.20"/></g><g fill="none" stroke="#3a3c42" stroke-width="1.15"><circle cx="727.45" cy="135.8" r="5.4"/><path d="M725.25 135.20 L727.45 137.30 L729.65 135.20"/></g><g fill="none" stroke="#3a3c42" stroke-width="1.15"><circle cx="831.4" cy="134.1" r="3.4"/><path d="M825.8 140.6 C827.2 138.6 829.2 137.6 831.4 137.6 C833.6 137.6 835.6 138.6 836.9 140.6" stroke-linecap="round"/></g><g fill="none" stroke="#3a3c42" stroke-width="1.15" stroke-linecap="round"><path d="M988.3 132.5 H997.8 M988.3 139.6 H997.8 M993.4 136 H997.8 M986.3 136 H989.6"/><path d="M989.2 134.1 L991.2 136 L989.2 137.9 Z" fill="#3a3c42" stroke-linejoin="round" stroke-width="0.8"/></g><g fill="none" stroke="#3a3c42" stroke-width="1.15" stroke-linecap="round"><path d="M1157.1 133.6 C1156.8 132.1 1155.5 131.3 1153.8 131.3 C1151.8 131.3 1150.5 132.3 1150.5 133.7 C1150.5 137.2 1157.6 135.2 1157.6 138.4 C1157.6 139.9 1156.1 140.6 1154 140.6 C1152 140.6 1150.6 139.8 1150.2 138.2 M1153.9 129.9 V131.3 M1153.9 140.6 V142"/></g><g fill="none" stroke="#9a9ca3" stroke-width="1.1"><circle cx="834.4" cy="163.70" r="4.9"/><path d="M832.0 163.70 H836.8"/></g><g fill="none" stroke="#9a9ca3" stroke-width="1.1"><circle cx="834.4" cy="192.35" r="4.9"/><path d="M832.0 192.35 H836.8"/></g><g fill="none" stroke="#9a9ca3" stroke-width="1.1"><circle cx="834.4" cy="221.00" r="4.9"/><path d="M832.0 221.00 H836.8"/></g><g fill="none" stroke="#9a9ca3" stroke-width="1.1"><circle cx="834.4" cy="249.65" r="4.9"/><path d="M832.0 249.65 H836.8"/></g><g fill="none" stroke="#9a9ca3" stroke-width="1.1"><circle cx="834.4" cy="278.30" r="4.9"/><path d="M832.0 278.30 H836.8"/></g><g fill="none" stroke="#9a9ca3" stroke-width="1.1"><circle cx="834.4" cy="306.95" r="4.9"/><path d="M832.0 306.95 H836.8"/></g><g fill="none" stroke="#9a9ca3" stroke-width="1.1"><circle cx="834.4" cy="335.60" r="4.9"/><path d="M832.0 335.60 H836.8"/></g><g fill="none" stroke="#9a9ca3" stroke-width="1.1"><circle cx="834.4" cy="364.25" r="4.9"/><path d="M832.0 364.25 H836.8"/></g><g fill="none" stroke="#9a9ca3" stroke-width="1.1"><circle cx="834.4" cy="392.90" r="4.9"/><path d="M832.0 392.90 H836.8"/></g><g fill="none" stroke="#9a9ca3" stroke-width="1.1"><circle cx="834.4" cy="421.55" r="4.9"/><path d="M832.0 421.55 H836.8"/></g><g fill="none" stroke="#9a9ca3" stroke-width="1.1"><circle cx="834.4" cy="450.20" r="4.9"/><path d="M832.0 450.20 H836.8"/></g><g fill="none" stroke="#9a9ca3" stroke-width="1.1"><circle cx="834.4" cy="478.85" r="4.9"/><path d="M832.0 478.85 H836.8"/></g><g fill="none" stroke="#9a9ca3" stroke-width="1.1"><circle cx="834.4" cy="507.50" r="4.9"/><path d="M832.0 507.50 H836.8"/></g><g fill="none" stroke="#9a9ca3" stroke-width="1.1"><circle cx="834.4" cy="536.15" r="4.9"/><path d="M832.0 536.15 H836.8"/></g><g fill="none" stroke="#9a9ca3" stroke-width="1.1"><circle cx="834.4" cy="564.80" r="4.9"/><path d="M832.0 564.80 H836.8"/></g><g fill="none" stroke="#9a9ca3" stroke-width="1.1"><circle cx="834.4" cy="593.45" r="4.9"/><path d="M832.0 593.45 H836.8"/></g><g fill="none" stroke="#9a9ca3" stroke-width="1.1"><circle cx="834.4" cy="622.10" r="4.9"/><path d="M832.0 622.10 H836.8"/></g><g fill="none" stroke="#9a9ca3" stroke-width="1.1"><circle cx="834.4" cy="650.75" r="4.9"/><path d="M832.0 650.75 H836.8"/></g><g fill="none" stroke="#9a9ca3" stroke-width="1.1"><circle cx="834.4" cy="679.40" r="4.9"/><path d="M832.0 679.40 H836.8"/></g><path d="M362.3 697.3 L370.6 689.0" stroke="#3a3c42" stroke-width="3.3" stroke-linecap="round" fill="none"/><path d="M362.3 697.3 L370.6 689.0" stroke="#fff" stroke-width="1.2" stroke-linecap="round" fill="none"/><path d="M363.5 688.1999999999999 L363.98 689.3199999999999 L365.1 689.8 L363.98 690.28 L363.5 691.4 L363.02 690.28 L361.9 689.8 L363.02 689.3199999999999 Z M371.7 694.0 L372.18 695.12 L373.3 695.6 L372.18 696.08 L371.7 697.2 L371.21999999999997 696.08 L370.09999999999997 695.6 L371.21999999999997 695.12 Z M368.7 697.3 L369.03 698.0699999999999 L369.8 698.4 L369.03 698.73 L368.7 699.5 L368.37 698.73 L367.59999999999997 698.4 L368.37 698.0699999999999 Z" fill="#3a3c42"/></svg>
</body></html>
